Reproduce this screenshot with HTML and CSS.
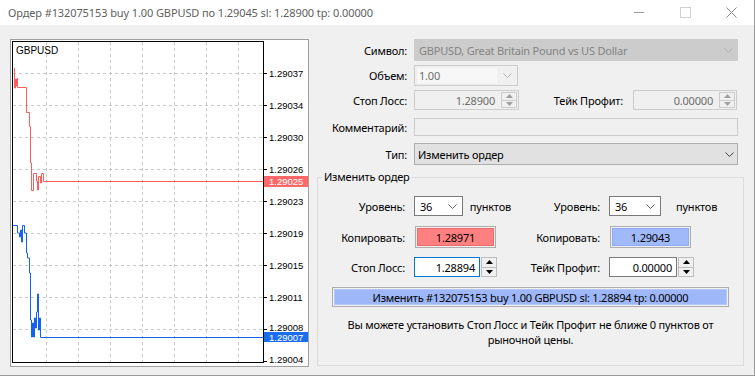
FILE: index.html
```html
<!DOCTYPE html>
<html>
    <head>
        <meta charset="UTF-8">
        <title>Ордер #132075153</title>
        <link rel="stylesheet" href="styles.css">
    </head>
    <body>
        <div class="window">
            <div class="titlebar">
                <span class="title">Ордер #132075153 buy 1.00 GBPUSD по 1.29045 sl: 1.28900 tp: 0.00000</span>
                <div class="caption-buttons">
                    <span class="cap-btn"><svg width="10" height="1"><line x1="0" y1="0.5" x2="10" y2="0.5" stroke="#9a9a9a"/></svg></span>
                    <span class="cap-btn"><svg width="11" height="11"><rect x="0.5" y="0.5" width="10" height="10" fill="none" stroke="#d0d0d0"/></svg></span>
                    <span class="cap-btn"><svg width="11" height="11"><path d="M0.5 0.5 L10.5 10.5 M10.5 0.5 L0.5 10.5" stroke="#8a8a8a"/></svg></span>
                </div>
            </div>

            <div class="client">
                <div class="chart-box">
                    <svg class="chart" width="297" height="326" viewBox="11 40 297 326">
                        <g stroke="#c8c8c8" stroke-dasharray="3 3">
                            <line x1="46.5" y1="42" x2="46.5" y2="362"/>
                            <line x1="78.5" y1="42" x2="78.5" y2="362"/>
                            <line x1="110.5" y1="42" x2="110.5" y2="362"/>
                            <line x1="142.5" y1="42" x2="142.5" y2="362"/>
                            <line x1="174.5" y1="42" x2="174.5" y2="362"/>
                            <line x1="206.5" y1="42" x2="206.5" y2="362"/>
                            <line x1="238.5" y1="42" x2="238.5" y2="362"/>
                            <line x1="13" y1="73.5" x2="263" y2="73.5"/>
                            <line x1="13" y1="105.5" x2="263" y2="105.5"/>
                            <line x1="13" y1="137.5" x2="263" y2="137.5"/>
                            <line x1="13" y1="169.5" x2="263" y2="169.5"/>
                            <line x1="13" y1="201.5" x2="263" y2="201.5"/>
                            <line x1="13" y1="233.5" x2="263" y2="233.5"/>
                            <line x1="13" y1="265.5" x2="263" y2="265.5"/>
                            <line x1="13" y1="297.5" x2="263" y2="297.5"/>
                            <line x1="13" y1="329.5" x2="263" y2="329.5"/>
                        </g>
                        <rect x="12.5" y="41.5" width="251" height="321" fill="none" stroke="#000"/>
                        <g stroke="#000">
                            <line x1="263" y1="73.5" x2="267" y2="73.5"/>
                            <line x1="263" y1="105.5" x2="267" y2="105.5"/>
                            <line x1="263" y1="137.5" x2="267" y2="137.5"/>
                            <line x1="263" y1="169.5" x2="267" y2="169.5"/>
                            <line x1="263" y1="201.5" x2="267" y2="201.5"/>
                            <line x1="263" y1="233.5" x2="267" y2="233.5"/>
                            <line x1="263" y1="265.5" x2="267" y2="265.5"/>
                            <line x1="263" y1="297.5" x2="267" y2="297.5"/>
                            <line x1="263" y1="329.5" x2="267" y2="329.5"/>
                            <line x1="263" y1="361.5" x2="267" y2="361.5"/>
                        </g>
                        <g class="axis-text">
                            <text x="269" y="77">1.29037</text>
                            <text x="269" y="109">1.29034</text>
                            <text x="269" y="141">1.29030</text>
                            <text x="269" y="173">1.29026</text>
                            <text x="269" y="205">1.29023</text>
                            <text x="269" y="237">1.29019</text>
                            <text x="269" y="269">1.29015</text>
                            <text x="269" y="301">1.29011</text>
                            <text x="269" y="331">1.29008</text>
                            <text x="269" y="363">1.29004</text>
                        </g>
                        <path d="M14.5 68 V88 H15.5 V79 H16.5 V86 H17.5 V78 V87.5 H26.5 V112.5 H29.5 V126.5 H30.5 V163 H31.5 V190.5 H33.5 V173.5 H36.5 V181 H37.5 V190 H38.5 V176.5 H40.5 V183 H41.5 V173.5 H43.5 V181.5 H263" fill="none" stroke="#ff5c5c"/>
                        <path d="M13 225.5 H17.5 V233 H19.5 V237 H20.5 V230 H21.5 V242 H22.5 V225.5 H24.5 V233 H26.5 V253 H27.5 V258 H29.5 V273 H30.5 V320 H31.5 V337 H32.5 V323 H33.5 V337 H34.5 V318 H35.5 V328 H36.5 V312 H37.5 V294 H38.5 V330 H39.5 V318 H40.5 V337.5 H263" fill="none" stroke="#1463ee"/>
                        <rect x="264" y="176" width="44" height="11" fill="#ff6868"/>
                        <text class="tag-text" x="269" y="185">1.29025</text>
                        <rect x="264" y="332" width="44" height="10" fill="#1b6df0"/>
                        <text class="tag-text" x="269" y="340.5">1.29007</text>
                        <text class="symbol-text" x="16" y="54">GBPUSD</text>
                    </svg>
                </div>

                <div class="form">
                    <div class="row r-symbol">
                        <label>Символ:</label>
                        <div class="combo off">
                            <span>GBPUSD, Great Britain Pound vs US Dollar</span>
                            <svg width="9" height="5"><polyline points="0.5,0.5 4.5,4.5 8.5,0.5" fill="none" stroke="#b0b0b0"/></svg>
                        </div>
                    </div>
                    <div class="row r-volume">
                        <label>Объем:</label>
                        <div class="combo edit-off">
                            <span class="edit-area">1.00</span>
                            <svg width="9" height="5"><polyline points="0.5,0.5 4.5,4.5 8.5,0.5" fill="none" stroke="#b0b0b0"/></svg>
                        </div>
                    </div>
                    <div class="row r-stop">
                        <label>Стоп Лосс:</label>
                        <div class="pair">
                            <div class="spin off sl-top">
                                <span class="value">1.28900</span>
                                <span class="updown">
                                    <span><svg width="7" height="4"><polygon points="0,4 3.5,0 7,4" fill="#a0a0a0"/></svg></span>
                                    <span><svg width="7" height="4"><polygon points="0,0 3.5,4 7,0" fill="#a0a0a0"/></svg></span>
                                </span>
                            </div>
                            <label class="pair-label">Тейк Профит:</label>
                            <div class="spin off tp-top">
                                <span class="value">0.00000</span>
                                <span class="updown">
                                    <span><svg width="7" height="4"><polygon points="0,4 3.5,0 7,4" fill="#a0a0a0"/></svg></span>
                                    <span><svg width="7" height="4"><polygon points="0,0 3.5,4 7,0" fill="#a0a0a0"/></svg></span>
                                </span>
                            </div>
                        </div>
                    </div>
                    <div class="row r-comment">
                        <label>Комментарий:</label>
                        <div class="text-off"></div>
                    </div>
                    <div class="row r-type">
                        <label>Тип:</label>
                        <div class="combo on">
                            <span>Изменить ордер</span>
                            <svg width="9" height="5"><polyline points="0.5,0.5 4.5,4.5 8.5,0.5" fill="none" stroke="#404040"/></svg>
                        </div>
                    </div>

                    <fieldset class="group">
                        <legend>Изменить ордер</legend>
                        <div class="g-row g-level">
                            <label>Уровень:</label>
                            <div class="cell">
                                <div class="combo level">
                                    <span>36</span>
                                    <svg width="9" height="5"><polyline points="0.5,0.5 4.5,4.5 8.5,0.5" fill="none" stroke="#606060"/></svg>
                                </div>
                                <span class="points">пунктов</span>
                            </div>
                            <label>Уровень:</label>
                            <div class="cell">
                                <div class="combo level">
                                    <span>36</span>
                                    <svg width="9" height="5"><polyline points="0.5,0.5 4.5,4.5 8.5,0.5" fill="none" stroke="#606060"/></svg>
                                </div>
                                <span class="points wide">пунктов</span>
                            </div>
                        </div>
                        <div class="g-row g-copy">
                            <label>Копировать:</label>
                            <div class="cell"><button class="copy"><span class="red">1.28971</span></button></div>
                            <label>Копировать:</label>
                            <div class="cell"><button class="copy"><span class="blue">1.29043</span></button></div>
                        </div>
                        <div class="g-row g-stops">
                            <label>Стоп Лосс:</label>
                            <div class="cell">
                                <span class="input focus sl">1.28894</span>
                                <span class="updown loose">
                                    <span><svg width="7" height="4"><polygon points="0,4 3.5,0 7,4" fill="#000"/></svg></span>
                                    <span><svg width="7" height="4"><polygon points="0,0 3.5,4 7,0" fill="#000"/></svg></span>
                                </span>
                            </div>
                            <label>Тейк Профит:</label>
                            <div class="cell">
                                <span class="input tp">0.00000</span>
                                <span class="updown loose">
                                    <span><svg width="7" height="4"><polygon points="0,4 3.5,0 7,4" fill="#000"/></svg></span>
                                    <span><svg width="7" height="4"><polygon points="0,0 3.5,4 7,0" fill="#000"/></svg></span>
                                </span>
                            </div>
                        </div>
                        <button class="apply"><span>Изменить #132075153 buy 1.00 GBPUSD sl: 1.28894 tp: 0.00000</span></button>
                        <p class="note">Вы можете установить Стоп Лосс и Тейк Профит не ближе 0 пунктов от<br>рыночной цены.</p>
                    </fieldset>
                </div>
            </div>
        </div>
    </body>
</html>
```

FILE: styles.css
```css
* {
    box-sizing: border-box;
}

body {
    margin: 0;
    background: #f0f0f0;
    font-family: "Noto Sans", sans-serif;
    font-size: 11px;
    color: #000;
}

.window {
    width: 755px;
    height: 376px;
    display: flex;
    flex-direction: column;
    border-right: 1px solid #9a9a9a;
    border-bottom: 1px solid #9a9a9a;
}

/* title bar */
.titlebar {
    height: 25px;
    background: #fff;
    display: flex;
    align-items: center;
    padding-left: 8px;
}

.title {
    flex: 1;
    color: #5f5f5f;
    white-space: nowrap;
    letter-spacing: -0.1px;
}

.caption-buttons {
    display: flex;
}

.cap-btn {
    width: 46px;
    height: 25px;
    display: flex;
    align-items: center;
    justify-content: center;
}

.cap-btn svg {
    display: block;
}

/* client area */
.client {
    flex: 1;
    display: flex;
    gap: 8px;
    padding: 14px 0 0 10px;
}

.chart-box {
    width: 299px;
    height: 328px;
    border: 1px solid #a0a0a0;
    background: #fff;
}

.chart {
    display: block;
}

.axis-text text {
    font-family: "Liberation Sans", sans-serif;
    font-size: 9.5px;
    fill: #000;
}

.tag-text {
    font-family: "Liberation Sans", sans-serif;
    font-size: 9.5px;
    fill: #fff;
}

.symbol-text {
    font-family: "Liberation Sans", sans-serif;
    font-size: 10px;
    fill: #000;
}

/* form */
.form {
    width: 427px;
    display: flex;
    flex-direction: column;
    letter-spacing: -0.2px;
}

.row {
    display: grid;
    grid-template-columns: 90px 1fr;
    column-gap: 7px;
    align-items: center;
    padding-right: 6px;
}

.row > label {
    text-align: right;
    white-space: nowrap;
}

.r-symbol { height: 22px; }
.r-volume { height: 20px; margin-top: 4px; }
.r-stop { height: 20px; margin-top: 5px; }
.r-comment { height: 18px; margin-top: 8px; }
.r-type { height: 22px; margin-top: 7px; }

.combo {
    height: 100%;
    display: flex;
    align-items: center;
    justify-content: space-between;
    padding: 0 4px 0 4px;
    border: 1px solid #adadad;
    white-space: nowrap;
}

.combo svg {
    display: block;
    flex: none;
}

.combo.off {
    background: #cccccc;
    border-color: #cccccc;
    color: #838383;
}

.combo.edit-off {
    width: 104px;
    background: #f0f0f0;
    border-color: #cccccc;
    color: #6d6d6d;
    padding: 2px 5px 2px 2px;
}

.edit-area {
    height: 100%;
    width: 80px;
    background: #f7f7f7;
    padding-left: 2px;
    display: flex;
    align-items: center;
}

.combo.on {
    background: #e1e1e1;
    border-color: #adadad;
    padding-left: 3px;
    padding-right: 3px;
}

.pair {
    display: flex;
    height: 100%;
}

.pair-label {
    width: 114px;
    padding-right: 10px;
    text-align: right;
    align-self: center;
    white-space: nowrap;
}

.spin {
    display: flex;
    height: 100%;
    border: 1px solid #cccccc;
    background: #f0f0f0;
    color: #6d6d6d;
}

.sl-top { width: 105px; }
.tp-top { width: 104px; }

.spin .value {
    flex: 1;
    text-align: right;
    padding-right: 5px;
    align-self: center;
}

.updown {
    width: 16px;
    display: flex;
    flex-direction: column;
    border: 1px solid #cccccc;
    margin: 1px;
}

.updown span {
    flex: 1;
    display: flex;
    align-items: center;
    justify-content: center;
}

.updown span + span {
    border-top: 1px solid #cccccc;
}

.updown svg {
    display: block;
}

.text-off {
    height: 100%;
    border: 1px solid #cccccc;
    background: #f0f0f0;
}

/* group box */
.group {
    margin: 5px 0 0 0;
    padding: 12px 0 0 0;
    height: 196px;
    border: 1px solid #dcdcdc;
    min-width: 0;
}

.group legend {
    margin-left: 4px;
    padding: 0 2px;
    line-height: 14px;
}

.g-row {
    display: grid;
    grid-template-columns: 87px 97px 80px 1fr;
    column-gap: 9px;
    align-items: center;
}

.g-row > label {
    text-align: right;
    white-space: nowrap;
}

.g-level { height: 20px; }
.g-copy { height: 22px; margin-top: 10px; }
.g-stops { height: 20px; margin-top: 9px; }

.cell {
    display: flex;
    align-items: center;
    height: 100%;
}

.combo.level {
    width: 52px;
    border-color: #7a7a7a;
    background: #fff;
    padding-left: 5px;
    padding-right: 5px;
}

.points {
    margin-left: 7px;
    white-space: nowrap;
}

.points.wide {
    margin-left: 15px;
}

.copy {
    margin-left: 1px;
    width: 81px;
    height: 22px;
    padding: 1px;
    border: 1px solid #adadad;
    background: #f0f0f0;
    font: inherit;
    letter-spacing: inherit;
    color: #000;
}

.copy span {
    display: flex;
    align-items: center;
    justify-content: center;
    height: 100%;
}

.copy .red {
    background: #ff8080;
    border: 1px solid #f06a6a;
}

.copy .blue {
    background: #a0b9f9;
    border: 1px solid #8eaaf5;
}

.input {
    height: 100%;
    background: #fff;
    border: 1px solid #7a7a7a;
    display: flex;
    align-items: center;
    justify-content: flex-end;
    padding-right: 4px;
}

.input.focus {
    border-color: #0078d7;
}

.input.sl { width: 66px; }
.input.tp { width: 68px; }

.updown.loose {
    height: 20px;
    margin: 0 0 0 1px;
    border-color: #bdbdbd;
    background: #f0f0f0;
}

.updown.loose span + span {
    border-top-color: #bdbdbd;
}

.apply {
    display: block;
    margin: 10px 0 0 14px;
    width: 397px;
    height: 20px;
    padding: 1px;
    border: 1px solid #adadad;
    background: #f0f0f0;
    font: inherit;
    letter-spacing: -0.25px;
    color: #000;
}

.apply span {
    display: flex;
    align-items: center;
    justify-content: center;
    height: 100%;
    background: #9db7f8;
    border: 1px solid #b3c7fa;
    white-space: nowrap;
}

.note {
    margin: 10px 0 0 0;
    line-height: 15px;
    text-align: center;
}
```
